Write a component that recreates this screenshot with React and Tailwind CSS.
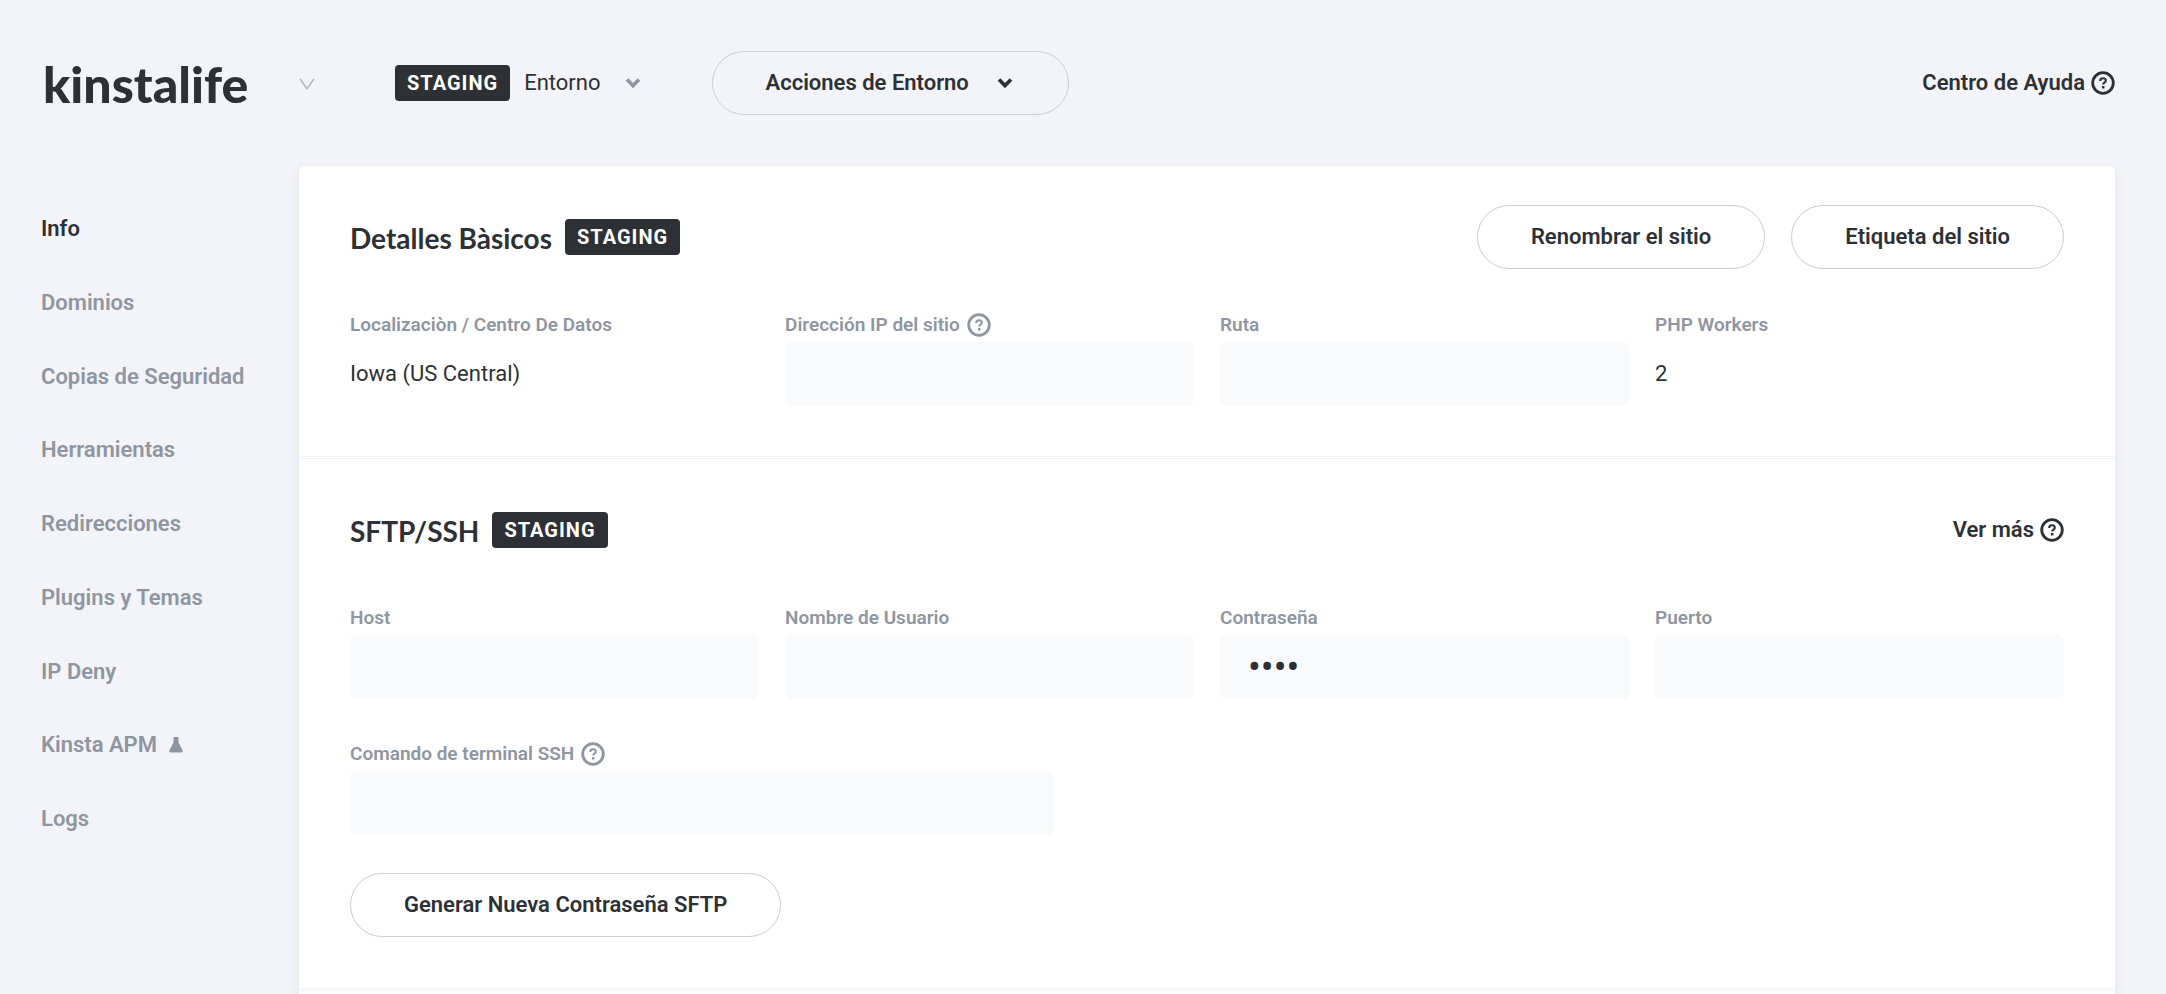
import React from "react";

const NAV = [
  { label: "Info", active: true },
  { label: "Dominios" },
  { label: "Copias de Seguridad" },
  { label: "Herramientas" },
  { label: "Redirecciones" },
  { label: "Plugins y Temas" },
  { label: "IP Deny" },
  { label: "Kinsta APM", beta: true },
  { label: "Logs" },
];

function HelpIcon() {
  return (
    <svg viewBox="0 0 24 24" className="size-6 shrink-0" fill="none" stroke="currentColor" aria-hidden="true">
      <circle cx="12" cy="12" r="10.3" strokeWidth="2.8" />
      <path d="M9.200 10c0-1.700 1.200-2.700 2.800-2.700s2.800 1 2.800 2.500c0 1.900-2.600 1.900-2.600 3.700" strokeWidth="2.1" />
      <path d="M12.200 15v2.500" strokeWidth="2.500" />
    </svg>
  );
}

function Chevron() {
  return (
    <svg viewBox="0 0 16 12" className="h-3 w-4 shrink-0" fill="none" stroke="currentColor" strokeWidth="3.6" aria-hidden="true">
      <path d="M2 2.6l6 6 6-6" />
    </svg>
  );
}

function ThinChevron() {
  return (
    <svg viewBox="0 0 16 12" className="h-3 w-4" fill="none" stroke="currentColor" strokeWidth="1.4" aria-hidden="true">
      <path d="M1 .8l7 10 7-10" />
    </svg>
  );
}

function Flask() {
  return (
    <svg viewBox="0 0 14 16" className="h-4 w-3.5" fill="currentColor" aria-hidden="true">
      <path d="M4.500 0h5v5.500l4 7.500c.8 1.500 0 2.600-1.500 2.600H2c-1.500 0-2.300-1.100-1.500-2.600l4-7.500z" />
    </svg>
  );
}

function Badge() {
  return (
    <span className="inline-flex h-9 items-center rounded-[4px] bg-[#2d3136] px-3 text-[20px] leading-6 font-bold tracking-[1px] text-white">
      STAGING
    </span>
  );
}

function PillButton({ children }) {
  return (
    <button
      type="button"
      className="flex h-16 items-center gap-[26px] rounded-full border border-[#cccbd6] px-[53px] text-[22px] leading-7 font-semibold whitespace-nowrap"
    >
      {children}
    </button>
  );
}

function SectionTitle({ children }) {
  return (
    <div className="flex items-center gap-[13px]">
      <h2 className="pt-0.5 font-['Lato',sans-serif] text-[28px] leading-9 font-bold">{children}</h2>
      <Badge />
    </div>
  );
}

const LABEL = "flex h-6 items-center gap-[7px] text-[19px] leading-6 font-semibold text-[#8f96a2]";

function Field({ id, label, help, type = "text", value }) {
  return (
    <div className="flex flex-col gap-[5px]">
      <label htmlFor={id} className={LABEL}>
        {label}
        {help && <HelpIcon />}
      </label>
      <input
        id={id}
        type={type}
        defaultValue={value}
        readOnly
        className="h-16 w-full rounded-md bg-[#f9fafc] px-7 text-[38px] outline-none"
      />
    </div>
  );
}

function Detail({ label, value }) {
  return (
    <div className="flex flex-col gap-[5px]">
      <dt className={LABEL}>{label}</dt>
      <dd className="flex h-16 items-center text-[22px] leading-7">{value}</dd>
    </div>
  );
}

export default function App() {
  return (
    <div className="flex h-screen flex-col overflow-hidden bg-[#f3f4f9] font-['Roboto',sans-serif] text-[#2d3136]">
      <header className="flex h-[166px] shrink-0 items-center pr-[51px] pl-[43px]">
        <h1 className="w-[256px] pt-0.5 font-['Lato',sans-serif] text-[50px] leading-[60px] font-black">kinstalife</h1>
        <button type="button" aria-label="Cambiar de sitio" className="pt-0.5 text-[#a9adb8]">
          <ThinChevron />
        </button>
        <button type="button" className="ml-20 flex items-center gap-3.5 text-[22px] leading-7">
          <Badge />
          Entorno
          <span className="ml-2.5 text-[#8f96a2]">
            <Chevron />
          </span>
        </button>
        <div className="ml-[71px]">
          <PillButton>
            Acciones de Entorno
            <span className="px-0.5">
              <Chevron />
            </span>
          </PillButton>
        </div>
        <a href="#ayuda" className="ml-auto flex items-center gap-1.5 text-[22px] leading-7 font-semibold">
          Centro de Ayuda
          <HelpIcon />
        </a>
      </header>

      <div className="flex min-h-0 flex-1 pr-[51px]">
        <nav className="w-[299px] shrink-0 pt-[49px] pl-[41px]">
          <ul className="flex h-[618px] flex-col justify-between text-[22px] leading-7 font-semibold">
            {NAV.map((item) => (
              <li key={item.label}>
                <a
                  href="#seccion"
                  className={item.active ? "flex items-center gap-3" : "flex items-center gap-3 text-[#8f96a2]"}
                >
                  {item.label}
                  {item.beta && <Flask />}
                </a>
              </li>
            ))}
          </ul>
        </nav>

        <main className="min-w-0 flex-1 rounded-t-md bg-white shadow-[0_4px_12px_#dfe4f0]">
          <section className="border-b-3 border-double border-[#f2f3f8] px-[51px] pt-[39px] pb-[50px]">
            <div className="flex items-center justify-between">
              <SectionTitle>Detalles Bàsicos</SectionTitle>
              <div className="flex gap-[26px]">
                <PillButton>Renombrar el sitio</PillButton>
                <PillButton>Etiqueta del sitio</PillButton>
              </div>
            </div>
            <dl className="mt-11 grid grid-cols-4 gap-x-[26px]">
              <Detail label="Localizaciòn / Centro De Datos" value="Iowa (US Central)" />
              <Field id="ip" label="Dirección IP del sitio" help />
              <Field id="ruta" label="Ruta" />
              <Detail label="PHP Workers" value="2" />
            </dl>
          </section>

          <section className="border-b-3 border-double border-[#f2f3f8] px-[51px] pt-[39px] pb-[51px]">
            <div className="flex h-16 items-center justify-between">
              <SectionTitle>SFTP/SSH</SectionTitle>
              <a href="#ver-mas" className="flex items-center gap-1.5 text-[22px] leading-7 font-semibold">
                Ver más
                <HelpIcon />
              </a>
            </div>
            <div className="mt-11 grid grid-cols-4 gap-x-[26px]">
              <Field id="host" label="Host" />
              <Field id="usuario" label="Nombre de Usuario" />
              <Field id="clave" label="Contraseña" type="password" value="demo" />
              <Field id="puerto" label="Puerto" />
            </div>
            <div className="mt-[43px] w-[41%]">
              <Field id="ssh" label="Comando de terminal SSH" help />
            </div>
            <div className="mt-[38px] flex">
              <PillButton>Generar Nueva Contraseña SFTP</PillButton>
            </div>
          </section>
        </main>
      </div>
    </div>
  );
}
